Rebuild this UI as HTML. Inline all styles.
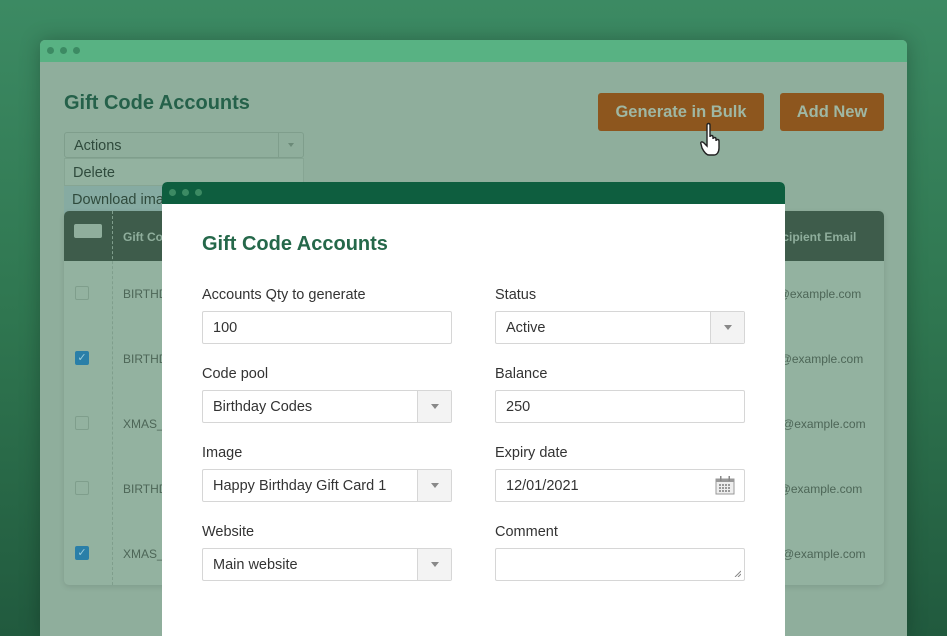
<!DOCTYPE html>
<html style="width:947px;height:636px;overflow:hidden"><head><style>
*{margin:0;padding:0;box-sizing:border-box}
body{width:947px;height:636px;overflow:hidden;position:relative;font-family:"Liberation Sans",sans-serif;background:linear-gradient(180deg,#3c8a63 0%,#2f7650 50%,#215a3e 100%)}
.a{position:absolute}
.win{left:40px;top:40px;width:867px;height:596px;background:#8fae9c;border-radius:5px 5px 0 0;overflow:hidden;box-shadow:0 0 20px rgba(0,0,0,.25)}
.bar{left:0;top:0;width:867px;height:22px;background:#58b283}
.dot{width:7px;height:7px;border-radius:50%;top:7px}
.btn{background:#8d561e;color:#9fb7a3;font-weight:bold;font-size:16.5px;text-align:center;line-height:38px;border-radius:3px}
.cb{width:14px;height:14px;border:1px solid #7f9e8c;border-radius:2px}
.cbc{background:#2a7fa8;border-color:#2a7fa8;color:#9cd;font-size:11px;line-height:12px;text-align:center}
.cell{font-size:12px;color:#4d6657}
.modal{left:162px;top:182px;width:623px;height:454px;background:#fff;border-radius:5px 5px 0 0;overflow:hidden}
.lbl{font-size:14.5px;color:#333}
.inp{height:33px;border:1px solid #d6d6d6;border-radius:2px;font-size:14.5px;color:#333;line-height:33px;padding-left:10px;background:#fff}
.sel:after{content:"";position:absolute;right:0;top:0;width:33px;height:31px;background:#f3f3f3;border-left:1px solid #d6d6d6}
.arr{position:absolute;right:12px;top:13px;width:0;height:0;border-left:4px solid transparent;border-right:4px solid transparent;border-top:5px solid #888;z-index:2}
</style></head><body>
<div class="a win">
 <div class="a bar"></div>
 <div class="a dot" style="left:7px;background:#3c8a63"></div>
 <div class="a dot" style="left:20px;background:#3c8a63"></div>
 <div class="a dot" style="left:33px;background:#3c8a63"></div>
 <div class="a" style="left:24px;top:52px;font-size:20px;font-weight:bold;color:#25614a">Gift Code Accounts</div>
 <div class="a" style="left:24px;top:92px;width:240px;height:26px;border:1px solid #7f9e8c;border-radius:3px;background:#8fae9c;font-size:14.5px;color:#2f4a3c;line-height:26px;padding-left:9px">Actions<div class="a" style="right:0;top:0;width:25px;height:24px;border-left:1px solid #7f9e8c"></div><div class="a" style="right:9px;top:10px;border-left:3px solid transparent;border-right:3px solid transparent;border-top:4px solid #6b8a78"></div></div>
 <div class="a" style="left:24px;top:118px;width:240px;height:28px;background:#93b2a0;border:1px solid #86a593;font-size:14.5px;color:#2f4a3c;line-height:28px;padding-left:8px">Delete</div>
 <div class="a" style="left:24px;top:146px;width:240px;height:28px;background:#86aba2;font-size:14.5px;color:#2f4a3c;line-height:28px;padding-left:8px">Download images</div>
 <div class="a btn" style="left:558px;top:53px;width:166px">Generate in Bulk</div>
 <div class="a btn" style="left:740px;top:53px;width:104px">Add New</div>
 <svg class="a" style="left:660px;top:82px" width="26" height="36" viewBox="0 0 26 36"><path d="M7 3c0-2 3-2 3 0v12c0-2 3-2 3 0v2c0-2 3-2 3 0v2c0-2 3-2 3 0v7c0 4-2 7-5 7h-5c-3 0-5-3-7-7l-1-4c-1-2 1-3 3-1l3 3z" fill="#fff" stroke="#222" stroke-width="1.4"/></svg>
 <div class="a" style="left:24px;top:171px;width:820px;height:374px;background:#93b2a0;border-radius:5px;box-shadow:0 2px 6px rgba(0,0,0,.1)"></div>
 <div class="a" style="left:24px;top:171px;width:820px;height:50px;background:#3e5c4b;border-radius:5px 5px 0 0"></div>
 <div class="a" style="left:34px;top:184px;width:28px;height:14px;background:#8fae9c;border-radius:2px"></div>
 <div class="a" style="left:72px;top:171px;width:1px;height:374px;border-left:1px dashed #7f9e8c"></div>
 <div class="a" style="left:83px;top:190px;font-size:12px;font-weight:bold;color:#8fae9c">Gift Co</div>
 <div class="a" style="left:727px;top:190px;font-size:12px;font-weight:bold;color:#8fae9c">Recipient Email</div>
 <div class="a cb" style="left:35px;top:246px"></div><div class="a cell" style="left:83px;top:247px">BIRTHDAY</div><div class="a cell" style="left:715px;top:247px">john@example.com</div>
 <div class="a cb cbc" style="left:35px;top:311px">✓</div><div class="a cell" style="left:83px;top:312px">BIRTHDAY</div><div class="a cell" style="left:717px;top:312px">jane@example.com</div>
 <div class="a cb" style="left:35px;top:376px"></div><div class="a cell" style="left:83px;top:377px">XMAS_</div><div class="a cell" style="left:722px;top:377px">bob@example.com</div>
 <div class="a cb" style="left:35px;top:441px"></div><div class="a cell" style="left:83px;top:442px">BIRTHDAY</div><div class="a cell" style="left:712px;top:442px">anne@example.com</div>
 <div class="a cb cbc" style="left:35px;top:506px">✓</div><div class="a cell" style="left:83px;top:507px">XMAS_</div><div class="a cell" style="left:722px;top:507px">tom@example.com</div>
</div>
<div class="a modal">
 <div class="a" style="left:0;top:0;width:623px;height:22px;background:#0e5e3f"></div>
 <div class="a dot" style="left:7px;background:#3c8a63"></div>
 <div class="a dot" style="left:20px;background:#3c8a63"></div>
 <div class="a dot" style="left:33px;background:#3c8a63"></div>
 <div class="a" style="left:40px;top:51px;font-size:20px;font-weight:bold;color:#25684a">Gift Code Accounts</div>
 <div class="a lbl" style="left:40px;top:105px">Accounts Qty to generate</div>
 <div class="a inp" style="left:40px;top:129px;width:250px">100</div>
 <div class="a lbl" style="left:40px;top:184px">Code pool</div>
 <div class="a inp sel" style="left:40px;top:208px;width:250px">Birthday Codes<span class="arr"></span></div>
 <div class="a lbl" style="left:40px;top:263px">Image</div>
 <div class="a inp sel" style="left:40px;top:287px;width:250px">Happy Birthday Gift Card 1<span class="arr"></span></div>
 <div class="a lbl" style="left:40px;top:342px">Website</div>
 <div class="a inp sel" style="left:40px;top:366px;width:250px">Main website<span class="arr"></span></div>
 <div class="a lbl" style="left:333px;top:105px">Status</div>
 <div class="a inp sel" style="left:333px;top:129px;width:250px">Active<span class="arr"></span></div>
 <div class="a lbl" style="left:333px;top:184px">Balance</div>
 <div class="a inp" style="left:333px;top:208px;width:250px">250</div>
 <div class="a lbl" style="left:333px;top:263px">Expiry date</div>
 <div class="a inp" style="left:333px;top:287px;width:250px">12/01/2021
  <svg class="a" style="right:9px;top:6px" width="20" height="19" viewBox="0 0 20 19"><rect x="1" y="3" width="18" height="15" fill="#eee" stroke="#999"/><rect x="1" y="3" width="18" height="3" fill="#999"/><rect x="5" y="0" width="1.5" height="5" fill="#888"/><rect x="13.5" y="0" width="1.5" height="5" fill="#888"/><g fill="#999"><rect x="4" y="8" width="2" height="2"/><rect x="7" y="8" width="2" height="2"/><rect x="10" y="8" width="2" height="2"/><rect x="13" y="8" width="2" height="2"/><rect x="4" y="11" width="2" height="2"/><rect x="7" y="11" width="2" height="2"/><rect x="10" y="11" width="2" height="2"/><rect x="13" y="11" width="2" height="2"/><rect x="4" y="14" width="2" height="2"/><rect x="7" y="14" width="2" height="2"/><rect x="10" y="14" width="2" height="2"/><rect x="13" y="14" width="2" height="2"/></g></svg></div>
 <div class="a lbl" style="left:333px;top:342px">Comment</div>
 <div class="a inp" style="left:333px;top:366px;width:250px"><svg class="a" style="right:3px;bottom:3px" width="7" height="7"><path d="M1 7L7 1M4 7L7 4" stroke="#888"/></svg></div>
</div>
</body></html>
